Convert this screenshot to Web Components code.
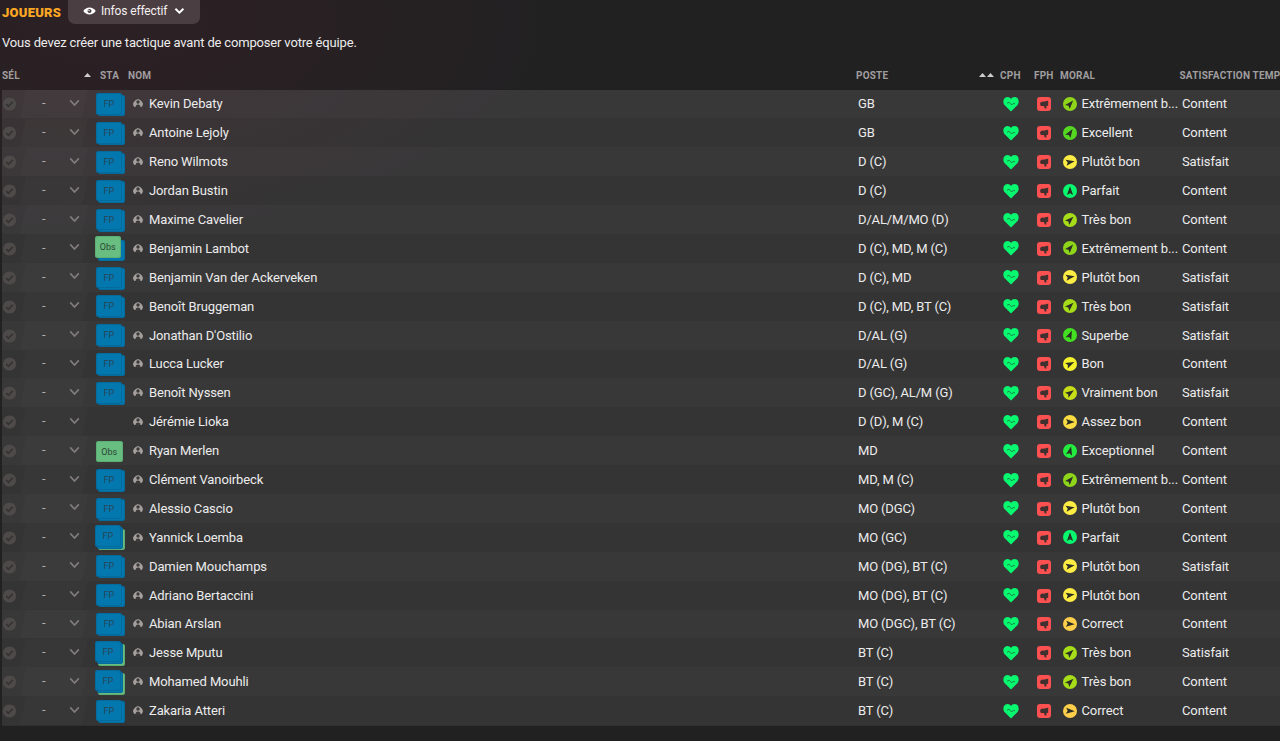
<!DOCTYPE html>
<html lang="fr">
<head>
  <meta charset="utf-8">
  <title>Joueurs</title>
  <style>
    html, body {
      margin: 0;
      height: 741px;
      overflow: hidden;
      background: #212122;
    }

    body {
      font-family: Roboto, "Liberation Sans", sans-serif;
      color: #ececec;
    }
  </style>
</head>
<body>
  <squad-page>
    <view-button slot="view">Infos effectif</view-button>
    <span slot="title">JOUEURS</span>
    <span slot="message">Vous devez créer une tactique avant de composer votre équipe.</span>
    <squad-table></squad-table>
  </squad-page>

  <script>
    // Same column tracks for every row
    const COLUMNS = '18px 73px 37px 726px 145px 28px 29px 122px 1fr';

    // label: [colour, heading of the arrow in degrees]
    const MORALE = {
      'Parfait': ['#07f86e', 0],
      'Exceptionnel': ['#24ec3e', 14],
      'Superbe': ['#43e022', 24],
      'Excellent': ['#54d822', 33],
      'Extrêmement b...': ['#8fd61b', 41],
      'Très bon': ['#a6dc18', 46],
      'Vraiment bon': ['#c6dd18', 55],
      'Bon': ['#f3f22c', 65],
      'Plutôt bon': ['#fcec44', 80],
      'Assez bon': ['#fbdc42', 90],
      'Correct': ['#ffce4b', 94]
    };

    // name, position, morale, satisfaction, status
    const PLAYERS = [
      ['Kevin Debaty', 'GB', 'Extrêmement b...', 'Content', 'fp'],
      ['Antoine Lejoly', 'GB', 'Excellent', 'Content', 'fp'],
      ['Reno Wilmots', 'D (C)', 'Plutôt bon', 'Satisfait', 'fp'],
      ['Jordan Bustin', 'D (C)', 'Parfait', 'Content', 'fp'],
      ['Maxime Cavelier', 'D/AL/M/MO (D)', 'Très bon', 'Content', 'fp'],
      ['Benjamin Lambot', 'D (C), MD, M (C)', 'Extrêmement b...', 'Content', 'obs-fp'],
      ['Benjamin Van der Ackerveken', 'D (C), MD', 'Plutôt bon', 'Satisfait', 'fp'],
      ['Benoît Bruggeman', 'D (C), MD, BT (C)', 'Très bon', 'Satisfait', 'fp'],
      ["Jonathan D'Ostilio", 'D/AL (G)', 'Superbe', 'Satisfait', 'fp'],
      ['Lucca Lucker', 'D/AL (G)', 'Bon', 'Content', 'fp'],
      ['Benoît Nyssen', 'D (GC), AL/M (G)', 'Vraiment bon', 'Satisfait', 'fp'],
      ['Jérémie Lioka', 'D (D), M (C)', 'Assez bon', 'Content', ''],
      ['Ryan Merlen', 'MD', 'Exceptionnel', 'Content', 'obs'],
      ['Clément Vanoirbeck', 'MD, M (C)', 'Extrêmement b...', 'Content', 'fp'],
      ['Alessio Cascio', 'MO (DGC)', 'Plutôt bon', 'Content', 'fp'],
      ['Yannick Loemba', 'MO (GC)', 'Parfait', 'Content', 'fp-obs'],
      ['Damien Mouchamps', 'MO (DG), BT (C)', 'Plutôt bon', 'Satisfait', 'fp'],
      ['Adriano Bertaccini', 'MO (DG), BT (C)', 'Plutôt bon', 'Content', 'fp'],
      ['Abian Arslan', 'MO (DGC), BT (C)', 'Correct', 'Content', 'fp'],
      ['Jesse Mputu', 'BT (C)', 'Très bon', 'Satisfait', 'fp-obs'],
      ['Mohamed Mouhli', 'BT (C)', 'Très bon', 'Content', 'fp-obs'],
      ['Zakaria Atteri', 'BT (C)', 'Correct', 'Content', 'fp']
    ];

    class SquadPage extends HTMLElement {
      constructor() {
        super();
        this.attachShadow({ mode: 'open' });
        this.shadowRoot.innerHTML = `
          <style>
            :host {
              display: flex;
              flex-direction: column;
              box-sizing: border-box;
              height: 741px;
              padding-left: 2px;
              overflow: hidden;
              background:
                radial-gradient(ellipse 460px 230px at 110px 20px, rgba(66, 30, 40, 0.34), rgba(66, 30, 40, 0.22) 45%, transparent),
                #212122;
            }

            header {
              display: flex;
              align-items: flex-start;
              height: 32px;
              gap: 7px;
            }

            h1 {
              margin: 5px 0 0;
              width: 59px;
              font: 900 13px/15px Roboto, sans-serif;
              letter-spacing: 0.25px;
              color: #fda723;
              white-space: nowrap;
            }

            p {
              margin: 0;
              height: 29px;
              font-size: 13px;
              line-height: 22px;
              letter-spacing: -0.17px;
              white-space: nowrap;
            }
          </style>
          <header>
            <h1><slot name="title"></slot></h1>
            <slot name="view"></slot>
          </header>
          <p><slot name="message"></slot></p>
          <slot></slot>
        `;
      }
    }

    class ViewButton extends HTMLElement {
      constructor() {
        super();
        this.attachShadow({ mode: 'open' });
        this.shadowRoot.innerHTML = `
          <style>
            :host {
              display: flex;
              align-items: center;
              box-sizing: border-box;
              width: 132px;
              height: 24px;
              padding: 0 15px 2px;
              border-radius: 0 0 7px 7px;
              background: #4b3e42;
              color: #f4f0f0;
              font-size: 12px;
              letter-spacing: -0.15px;
              white-space: nowrap;
            }

            .eye {
              margin-right: 5px;
            }

            .arrow {
              margin-left: auto;
            }
          </style>
          <svg class="eye" width="13" height="10" viewBox="0 0 13 10">
            <path d="M.3 5C3 .2 10 .2 12.7 5C10 9.6 3 9.6 .3 5Z" fill="#fff"/>
            <circle cx="6.5" cy="5" r="2" fill="#4b3e42"/>
            <circle cx="6" cy="4.5" r=".7" fill="#fff"/>
          </svg>
          <slot></slot>
          <svg class="arrow" width="11" height="8" viewBox="0 0 11 8">
            <path d="M1.4 1.8L5.4 5.7L9.4 1.8" fill="none" stroke="#fff" stroke-width="2"/>
          </svg>
        `;
      }
    }

    class StatusBadge extends HTMLElement {
      connectedCallback() {
        const type = this.getAttribute('type');
        this.attachShadow({ mode: 'open' });
        const layers = {
          'fp': [['blue', 3, 4.8, ''], ['blue', 0.5, 3.3, 'FP']],
          'obs': [['green', 1, 4.3, 'Obs']],
          'obs-fp': [['blue', 3, 5.3, ''], ['green', -0.5, 2, 'Obs']],
          'fp-obs': [['green', 3, 5.3, ''], ['blue', 1.5, 4, ''], ['blue', -0.5, 2, 'FP']]
        }[type] || [];

        this.shadowRoot.innerHTML = `
          <style>
            :host {
              display: block;
              position: relative;
              width: 31px;
              height: 28px;
              margin-left: 2px;
            }

            /* stacked cards, the last one on top */
            div {
              position: absolute;
              box-sizing: border-box;
              width: 26.5px;
              height: 21.5px;
              border-radius: 3px;
              font-size: 9px;
              line-height: 22px;
              text-align: center;
            }

            .blue {
              background: #0278ae;
              box-shadow: inset 0 0 0 1px #056a9c;
              color: #2a4455;
            }

            .green {
              background: #68bd80;
              box-shadow: inset 0 0 0 1px #5cae73;
              color: #2c4635;
            }
          </style>
          ${layers.map(([color, x, y, text]) => `<div class="${color}" style="left:${x}px;top:${y}px">${text}</div>`).join('')}
        `;
      }
    }

    class MoraleIcon extends HTMLElement {
      connectedCallback() {
        const [color, angle] = MORALE[this.getAttribute('level')];
        this.attachShadow({ mode: 'open' });
        this.shadowRoot.innerHTML = `
          <style>
            :host {
              display: block;
              width: 14px;
              height: 14px;
            }

            svg {
              display: block;
            }
          </style>
          <svg width="14" height="14" viewBox="0 0 14 14">
            <circle cx="7" cy="7" r="7" fill="${color}"/>
            <path d="M7 2.2L10.1 11L7 9.3L3.9 11Z" fill="#2b2e24" transform="rotate(${angle} 7 7)"/>
          </svg>
        `;
      }
    }

    class PlayerRow extends HTMLElement {
      connectedCallback() {
        const [name, position, morale, satisfaction, status] = PLAYERS[this.getAttribute('index')];
        this.attachShadow({ mode: 'open' });
        this.shadowRoot.innerHTML = `
          <style>
            :host {
              display: grid;
              grid-template-columns: ${COLUMNS};
              align-items: center;
              height: 28.9px;
              font-size: 13px;
              white-space: nowrap;
              background: rgba(255, 255, 255, 0.085);
            }

            :host([alt]) {
              background: rgba(255, 255, 255, 0.105);
            }

            svg {
              display: block;
            }

            .pick {
              display: flex;
              align-items: center;
              justify-content: space-between;
              box-sizing: border-box;
              height: 28.9px;
              width: 68px;
              padding: 0 8px 2px 22px;
              background: rgba(255, 255, 255, 0.018);
              clip-path: polygon(6px 0, 100% 0, 62px 100%, 0 100%);
              color: #b0adad;
            }

            .name {
              display: flex;
              align-items: center;
              gap: 6px;
              padding-left: 3px;
              letter-spacing: -0.12px;
            }

            .name svg {
              margin-top: -1px;
            }

            .position {
              padding-left: 2px;
              letter-spacing: -0.15px;
            }

            .heart {
              margin-left: 2px;
            }

            .thumb {
              margin: 1px 0 0 8px;
            }

            .morale {
              display: flex;
              align-items: center;
              gap: 4.5px;
              padding-left: 5px;
              letter-spacing: -0.1px;
            }

            .satisfaction {
              padding-left: 2px;
              letter-spacing: -0.1px;
            }
          </style>
          <svg width="15" height="15" viewBox="0 0 15 15">
            <circle cx="7.5" cy="8" r="6.6" fill="#4d4a49"/>
            <path d="M4.2 8.2L6.5 10.3L10.8 5.8" fill="none" stroke="#353434" stroke-width="1.8"/>
          </svg>
          <div class="pick">
            <span>-</span>
            <svg width="11" height="8" viewBox="0 0 11 8">
              <path d="M1.2 1.4L5.5 6L9.8 1.4" fill="none" stroke="#7f7c7b" stroke-width="1.7"/>
            </svg>
          </div>
          <status-badge type="${status}"></status-badge>
          <div class="name">
            <svg width="10" height="10" viewBox="0 0 10 10">
              <path d="M1.6 9A4.4 4.4 0 1 1 8.4 9" fill="#a5a09d" stroke="#a5a09d" stroke-width=".8"/>
              <circle cx="5" cy="4" r="1.7" fill="#3b3939"/>
              <path d="M2.4 10C2.4 7.5 3.5 6.6 5 6.6S7.6 7.5 7.6 10Z" fill="#3b3939"/>
            </svg>
            <span>${name}</span>
          </div>
          <span class="position">${position}</span>
          <svg class="heart" width="16" height="16" viewBox="0 0 16 16">
            <path d="M8 15.6L1.7 9.2C-.8 6.2 .3 .9 4.3 .9C6.1 .9 7.4 1.8 8 3C8.6 1.8 9.9 .9 11.7 .9C15.7 .9 16.8 6.2 14.3 9.2Z" fill="#08f870"/>
            <path d="M4 7.3L6 6.2L8.8 9L10.3 7.3L12 7.8" fill="none" stroke="#177a43" stroke-width=".9"/>
          </svg>
          <svg class="thumb" width="14" height="14" viewBox="0 0 14 14">
            <rect width="14" height="14" rx="3" fill="#fd5151"/>
            <path d="M3 6.4L4.2 4.8L8 4.6L9 4.1L11.2 3.7V8.7L9.4 9.1V11.4H7.8L6.9 8.9H3.7Z" fill="#40302f"/>
          </svg>
          <div class="morale">
            <morale-icon level="${morale}"></morale-icon>
            <span>${morale}</span>
          </div>
          <span class="satisfaction">${satisfaction}</span>
        `;
      }
    }

    class SquadTable extends HTMLElement {
      constructor() {
        super();
        this.attachShadow({ mode: 'open' });
        this.shadowRoot.innerHTML = `
          <style>
            :host {
              display: block;
            }

            .head {
              display: grid;
              grid-template-columns: 85px 13px 28px 728px 123px 21px 34px 26px 119.5px 1fr;
              align-items: center;
              height: 28.5px;
              font-size: 10px;
              font-weight: 700;
              letter-spacing: 0.2px;
              color: #a09d9e;
              white-space: nowrap;
            }

            .head svg {
              display: block;
              fill: #cfcdce;
            }

            .head svg:first-of-type {
              margin-left: -3px;
            }

            .body {
              border-bottom: 1px solid #303030;
            }
          </style>
          <div class="head">
            <span>SÉL</span>
            <svg width="7" height="4" viewBox="0 0 7 4"><path d="M0 4L3.5 0L7 4Z"/></svg>
            <span>STA</span>
            <span>NOM</span>
            <span>POSTE</span>
            <svg width="15" height="4" viewBox="0 0 15 4"><path d="M0 4L3.5 0L7 4ZM8 4L11.5 0L15 4Z"/></svg>
            <span>CPH</span>
            <span>FPH</span>
            <span>MORAL</span>
            <span>SATISFACTION TEMPS</span>
          </div>
          <div class="body">
            ${PLAYERS.map((_, i) => `<player-row index="${i}"${i % 2 ? '' : ' alt'}></player-row>`).join('')}
          </div>
        `;
      }
    }

    customElements.define('view-button', ViewButton);
    customElements.define('status-badge', StatusBadge);
    customElements.define('morale-icon', MoraleIcon);
    customElements.define('player-row', PlayerRow);
    customElements.define('squad-table', SquadTable);
    customElements.define('squad-page', SquadPage);
  </script>
</body>
</html>
